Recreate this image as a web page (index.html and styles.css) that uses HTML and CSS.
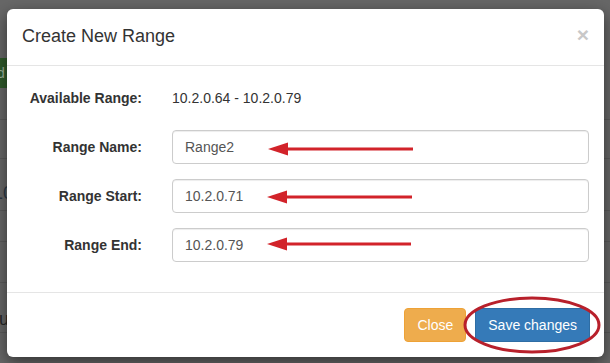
FILE: index.html
```html
<!DOCTYPE html>
<html lang="en">
<head>
  <meta charset="UTF-8">
  <meta name="viewport" content="width=device-width, initial-scale=1.0">
  <title>Create New Range</title>
  <link rel="stylesheet" href="styles.css">
</head>
<body>
  <!-- Page behind the dialog, dimmed -->
  <div class="page">
    <div class="add-button">Add</div>
    <div class="table">
      <div class="table-row"></div>
      <div class="table-row"></div>
      <div class="table-row"><span class="cell-text">10</span></div>
      <div class="table-row"></div>
      <div class="table-row"></div>
      <div class="table-row"><span class="cell-text dark">Sub</span></div>
    </div>
  </div>

  <div class="modal">
    <div class="modal-header">
      <h4 class="modal-title">Create New Range</h4>
      <button class="close" type="button">&times;</button>
    </div>

    <form class="modal-body">
      <div class="form-group">
        <label class="control-label">Available Range:</label>
        <div class="form-static">10.2.0.64 - 10.2.0.79</div>
      </div>
      <div class="form-group">
        <label class="control-label" for="rangeName">Range Name:</label>
        <input class="form-control" id="rangeName" type="text" value="Range2">
      </div>
      <div class="form-group">
        <label class="control-label" for="rangeStart">Range Start:</label>
        <input class="form-control" id="rangeStart" type="text" value="10.2.0.71">
      </div>
      <div class="form-group">
        <label class="control-label" for="rangeEnd">Range End:</label>
        <input class="form-control" id="rangeEnd" type="text" value="10.2.0.79">
      </div>
    </form>

    <div class="modal-footer">
      <button class="btn btn-warning" type="button">Close</button>
      <button class="btn btn-primary" type="button">Save changes</button>
    </div>
  </div>

  <!-- Red annotation marks drawn over the screenshot -->
  <svg class="annotations" width="610" height="363" viewBox="0 0 610 363">
    <g fill="#d2232a" stroke="#d2232a">
      <line x1="284" y1="149" x2="413" y2="149" stroke-width="3"/>
      <polygon points="268,149 288,142.5 288,155.5" stroke="none"/>
      <line x1="283" y1="197" x2="412" y2="197" stroke-width="3"/>
      <polygon points="267,197 287,190.5 287,203.5" stroke="none"/>
      <line x1="283" y1="244" x2="411" y2="244" stroke-width="3"/>
      <polygon points="267,244 287,237.5 287,250.5" stroke="none"/>
    </g>
    <ellipse cx="532" cy="325" rx="67" ry="27" fill="none" stroke="#b8202b" stroke-width="3"/>
  </svg>
</body>
</html>
```

FILE: styles.css
```css
* {
  box-sizing: border-box;
}

body {
  margin: 0;
  width: 610px;
  height: 363px;
  overflow: hidden;
  position: relative;
  background-color: #676767;
  font-family: "Liberation Sans", Arial, sans-serif;
  font-size: 14px;
  color: #333;
}

/* dimmed page behind the dialog */
.page {
  padding-top: 58px;
}

.add-button {
  width: 60px;
  height: 30px;
  background-color: #2f5a2a;
  color: #9fb39c;
  font-size: 14px;
  line-height: 30px;
  padding-left: 0;
  text-indent: -20px;
}

.table-row {
  border-bottom: 1px solid #5a5a5a;
  height: 40px;
  position: relative;
}

.table-row:nth-child(1) { height: 32px; }
.table-row:nth-child(2) { height: 39px; }
.table-row:nth-child(3) { height: 52px; }
.table-row:nth-child(4) { height: 31px; }
.table-row:nth-child(5) { height: 41px; }
.table-row:nth-child(6) { height: 50px; }

.cell-text {
  display: block;
  margin-left: -7px;
  padding-top: 24px;
  font-size: 18px;
  color: #2c3846;
}

.cell-text.dark {
  margin-left: -13px;
  padding-top: 26px;
  color: #262626;
}

/* dialog */
.modal {
  position: absolute;
  top: 9px;
  left: 7px;
  width: 597px;
  background-color: #fff;
  border-radius: 6px;
  box-shadow: 0 5px 15px rgba(0, 0, 0, 0.5);
}

.modal-header {
  display: flex;
  justify-content: space-between;
  align-items: center;
  padding: 15px;
  border-bottom: 1px solid #e5e5e5;
}

.modal-title {
  margin: 0;
  font-size: 18px;
  font-weight: normal;
  line-height: 25.7px;
}

.close {
  background: none;
  border: none;
  padding: 0;
  margin-top: -4px;
  font-family: "Liberation Sans", Arial, sans-serif;
  font-size: 21px;
  font-weight: bold;
  line-height: 1;
  color: #c8c8c8;
  cursor: pointer;
}

.modal-body {
  margin: 0;
  padding: 15px;
}

.form-group {
  display: grid;
  grid-template-columns: 120px 1fr;
  column-gap: 30px;
  align-items: center;
  margin-bottom: 15px;
}

.control-label {
  text-align: right;
  font-weight: bold;
  color: #333;
}

.form-static {
  line-height: 34px;
}

.form-control {
  width: 100%;
  height: 34px;
  padding: 6px 12px;
  font-family: "Liberation Sans", Arial, sans-serif;
  font-size: 14px;
  color: #555;
  background-color: #fff;
  border: 1px solid #ccc;
  border-radius: 4px;
  box-shadow: inset 0 1px 1px rgba(0, 0, 0, 0.075);
}

.modal-footer {
  display: flex;
  justify-content: flex-end;
  gap: 9px;
  padding: 15px 14px 15px 15px;
  border-top: 1px solid #e5e5e5;
}

.btn {
  height: 34px;
  padding: 6px 12px;
  font-family: "Liberation Sans", Arial, sans-serif;
  font-size: 14px;
  color: #fff;
  border: 1px solid transparent;
  border-radius: 4px;
  cursor: pointer;
}

.btn-warning {
  background-color: #eeac4d;
  border-color: #eea236;
}

.btn-primary {
  background-color: #357ab8;
  border-color: #2e6da4;
}

.annotations {
  position: absolute;
  top: 0;
  left: 0;
  pointer-events: none;
}
```
